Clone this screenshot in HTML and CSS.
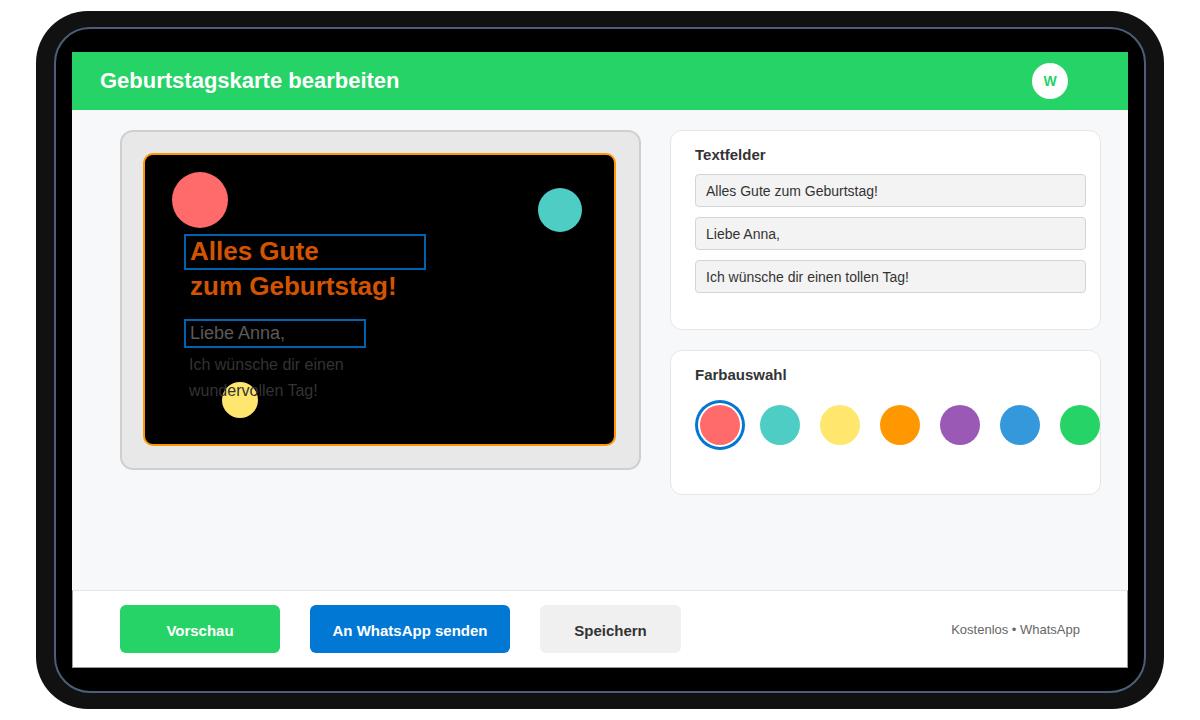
FILE: index.html
```html
<!DOCTYPE html>
<html>
<head>
	<meta charset="utf-8">
	<title>Geburtstagskarte bearbeiten</title>
	<link rel="stylesheet" href="styles.css">
</head>
<body>
	<div class="device">
		<div class="bezel">
			<div class="screen">
				<header class="topbar">
					<h1>Geburtstagskarte bearbeiten</h1>
					<div class="avatar">W</div>
				</header>

				<main class="editor">
					<div class="stage">
						<div class="card">
							<span class="dot dot-red"></span>
							<span class="dot dot-teal"></span>
							<span class="dot dot-yellow"></span>

							<div class="card-title selected">
								<div>Alles Gute<br>zum Geburtstag!</div>
							</div>
							<div class="card-greeting selected">Liebe Anna,</div>
							<div class="card-message">Ich wünsche dir einen wundervollen Tag!</div>
						</div>
					</div>

					<div class="sidebar">
						<section class="panel">
							<h2>Textfelder</h2>
							<div class="fields">
								<input class="field" type="text" value="Alles Gute zum Geburtstag!">
								<input class="field" type="text" value="Liebe Anna,">
								<input class="field" type="text" value="Ich wünsche dir einen tollen Tag!">
							</div>
						</section>

						<section class="panel panel-colors">
							<h2>Farbauswahl</h2>
							<div class="swatches">
								<button class="swatch active" style="background:#ff6b6b"></button>
								<button class="swatch" style="background:#4ecdc4"></button>
								<button class="swatch" style="background:#ffe66d"></button>
								<button class="swatch" style="background:#ff9800"></button>
								<button class="swatch" style="background:#9b59b6"></button>
								<button class="swatch" style="background:#3498db"></button>
								<button class="swatch" style="background:#25d366"></button>
							</div>
						</section>
					</div>
				</main>

				<footer class="actions">
					<button class="btn btn-green">Vorschau</button>
					<button class="btn btn-blue">An WhatsApp senden</button>
					<button class="btn btn-gray">Speichern</button>
					<span class="note">Kostenlos • WhatsApp</span>
				</footer>
			</div>
		</div>
	</div>
</body>
</html>
```

FILE: styles.css
```css
*{
	box-sizing: border-box;
	font-family: "Liberation Sans", Arial, Helvetica, sans-serif;
}
body,html{
	margin: 0;
	padding: 0;
	background: #fff;
}
h1,h2{
	margin: 0;
}

/* device frame */
.device{
	width: 1128px;
	height: 698px;
	margin: 11px 36px;
	padding: 16px 18px;
	background: #111;
	border-radius: 52px;
}
.bezel{
	height: 100%;
	padding: 23px 16px;
	background: #000;
	border: 2px solid #4a6078;
	border-radius: 36px;
}
.screen{
	height: 616px;
	display: flex;
	flex-direction: column;
	background: #f7f8fa;
}

/* header */
.topbar{
	height: 58px;
	display: flex;
	align-items: center;
	justify-content: space-between;
	padding: 0 60px 0 28px;
	background: #25d366;
}
.topbar h1{
	color: #fff;
	font-size: 22px;
	font-weight: bold;
}
.avatar{
	width: 36px;
	height: 36px;
	border-radius: 50%;
	background: #fff;
	color: #25d366;
	font-size: 14px;
	font-weight: bold;
	display: flex;
	align-items: center;
	justify-content: center;
}

/* main */
.editor{
	height: 480px;
	display: flex;
	align-items: flex-start;
	gap: 29px;
	padding: 20px 0 0 48px;
}
.stage{
	width: 521px;
	height: 340px;
	padding: 21px 23px 22px 21px;
	background: #e8e8e8;
	border: 2px solid #cfcfcf;
	border-radius: 13px;
}
.card{
	position: relative;
	height: 100%;
	padding: 79px 0 0 39px;
	background: #000;
	border: 2px solid #ff9800;
	border-radius: 10px;
}
.dot{
	position: absolute;
	border-radius: 50%;
}
.dot-red{
	left: 27px;
	top: 17px;
	width: 56px;
	height: 56px;
	background: #ff6b6b;
}
.dot-teal{
	left: 393px;
	top: 33px;
	width: 44px;
	height: 44px;
	background: #4ecdc4;
}
.dot-yellow{
	left: 77px;
	top: 227px;
	width: 36px;
	height: 36px;
	background: #ffe66d;
}
.selected{
	border: 2px solid #0063b1;
}
.card-title{
	position: relative;
	width: 242px;
	height: 36px;
	padding: 0 4px;
	color: #d35400;
	font-size: 26px;
	font-weight: bold;
	line-height: 35px;
}
.card-title div{
	margin-top: -2px;
	white-space: nowrap;
}
.card-greeting{
	position: relative;
	width: 182px;
	height: 29px;
	margin-top: 49px;
	padding: 0 4px;
	color: #5a5a5a;
	font-size: 18px;
	line-height: 25px;
}
.card-message{
	position: relative;
	width: 182px;
	margin-top: 4px;
	padding: 0 5px;
	color: #333;
	font-size: 16px;
	line-height: 25.6px;
}

/* sidebar */
.sidebar{
	width: 431px;
	display: flex;
	flex-direction: column;
	gap: 20px;
}
.panel{
	background: #fff;
	border: 1px solid #e4e6e9;
	border-radius: 12px;
	padding: 15px 14px 36px 24px;
}
.panel h2{
	font-size: 15px;
	line-height: 18px;
	color: #333;
	margin-bottom: 10px;
}
.fields{
	display: flex;
	flex-direction: column;
	gap: 10px;
}
.field{
	width: 391px;
	height: 33px;
	padding: 0 10px;
	background: #f3f3f3;
	border: 1px solid #d4d4d4;
	border-radius: 4px;
	color: #333;
	font-size: 14px;
	outline: none;
}
.panel-colors{
	padding-bottom: 44px;
}
.panel-colors h2{
	margin-bottom: 16px;
}
.swatches{
	display: flex;
	gap: 20px;
	padding: 5px;
}
.swatch{
	flex: none;
	width: 40px;
	height: 40px;
	border: none;
	border-radius: 50%;
	padding: 0;
}
.swatch.active{
	box-shadow: 0 0 0 2px #fff, 0 0 0 5px #0078d4;
}

/* footer */
.actions{
	height: 78px;
	display: flex;
	align-items: center;
	gap: 30px;
	padding: 0 47px 0 47px;
	background: #fff;
	border: 1px solid #9a9a9a;
	border-top-color: #e4e6e9;
}
.btn{
	height: 48px;
	padding: 3px 0 0;
	border: none;
	border-radius: 6px;
	font-size: 15px;
	font-weight: bold;
	color: #fff;
}
.btn-green{
	width: 160px;
	background: #25d366;
}
.btn-blue{
	width: 200px;
	background: #0078d4;
}
.btn-gray{
	width: 141px;
	background: #f0f0f0;
	color: #333;
}
.note{
	margin-left: auto;
	color: #666;
	font-size: 13px;
}
```
